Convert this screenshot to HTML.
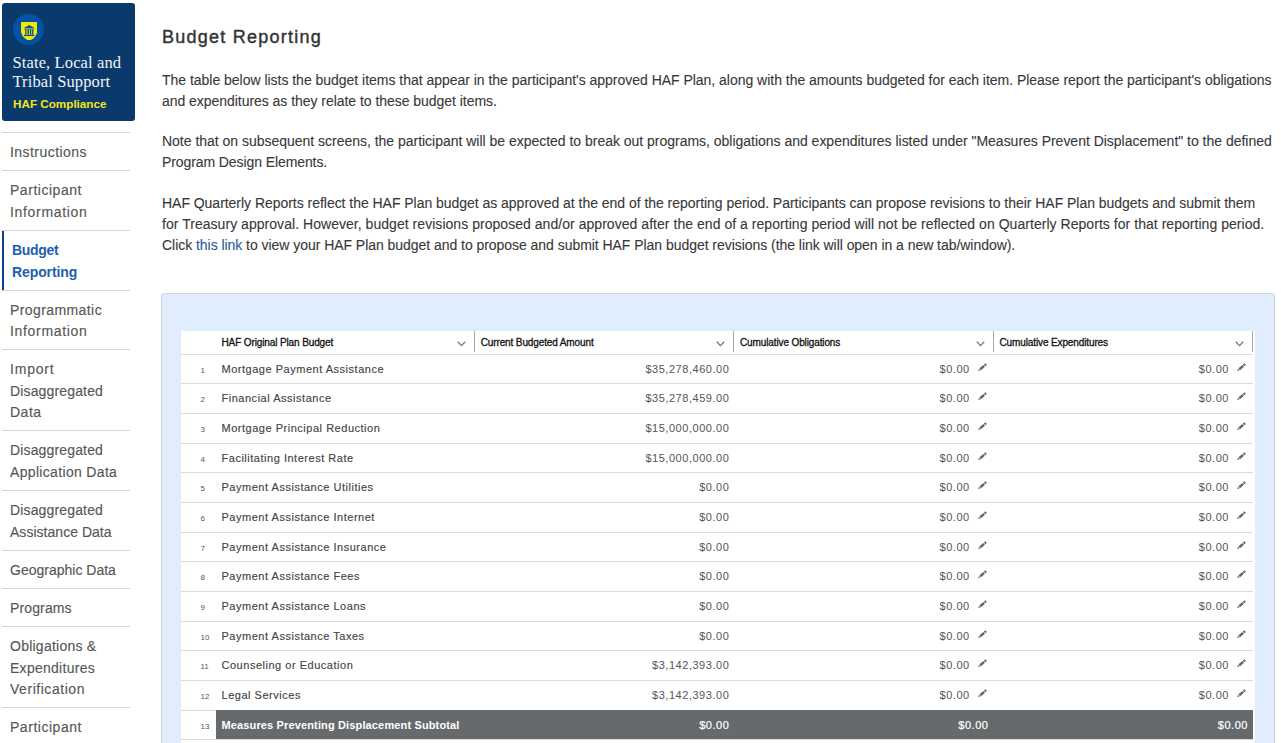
<!DOCTYPE html>
<html><head><meta charset="utf-8">
<style>
*{box-sizing:border-box;margin:0;padding:0}
html,body{width:1281px;height:743px;overflow:hidden;background:#fff;font-family:"Liberation Sans",sans-serif}
.logo{position:absolute;left:2px;top:3px;width:133px;height:118px;background:#0a3a6b;border-radius:3px}
.circ{position:absolute;left:10.9px;top:11px;width:31px;height:31px;border-radius:50%;background:#0352a3}
.logo .t1{position:absolute;left:10.5px;top:50px;font-family:"Liberation Serif",serif;font-size:16.5px;line-height:19px;color:#f2f3f7;letter-spacing:0.12px;white-space:nowrap}
.logo .t2{position:absolute;left:11px;top:94px;font-size:11.7px;font-weight:700;color:#f4e61a;white-space:nowrap;line-height:14px}
.nav{position:absolute;left:2px;top:132.2px;width:128px}
.nav div{border-top:1px solid #d4d4d4;padding:9px 0 6.75px 8px;font-size:14px;line-height:21.45px;color:#575757;position:relative;-webkit-text-stroke:0.15px #575757}
.nav span{display:block;white-space:nowrap}
.nav div.act{color:#1c5fad;font-weight:700;padding-left:10px;-webkit-text-stroke:0}
.nav div.act:before{content:"";position:absolute;left:0;top:0;bottom:0;width:2px;background:#0c3d8e}
.main{position:absolute;left:162px;top:0;width:1115px}
h1{position:absolute;left:0;top:26px;font-size:18px;font-weight:400;letter-spacing:1.25px;-webkit-text-stroke:0.4px #333;color:#333;white-space:nowrap;line-height:22px}
.p{position:absolute;left:0;font-size:14px;line-height:21px;color:#383838;white-space:nowrap;-webkit-text-stroke:0.1px #383838}
.p span{display:block}
.p a{color:#1f5ea8;text-decoration:none}
.box{position:absolute;left:161px;top:293px;width:1114px;height:460px;background:#e0edfd;border:1px solid #cfd6df;border-radius:3px}
.tbl{position:absolute;left:181px;top:331px;width:1074px;background:#fff;padding-right:2px}
.hdr{position:relative;height:23.6px;border-bottom:1.5px solid #dcdcdc}
.hc{position:absolute;top:-0.5px;height:21px;font-size:10px;font-weight:400;-webkit-text-stroke:0.3px #111;letter-spacing:-0.12px;color:#111;line-height:23px;white-space:nowrap}
.sep{position:absolute;top:0;width:1px;height:21px;background:#a8a8a8}
.chev{position:absolute;top:9.5px;width:9px;height:6px}
.row{position:relative;height:29.675px;border-bottom:1px solid #dadada}
.num{position:absolute;left:19.5px;font-size:8px;color:#555;top:1px;line-height:30px}
.nm{position:absolute;left:40.5px;font-size:11px;letter-spacing:0.52px;color:#444;line-height:29px;white-space:nowrap;-webkit-text-stroke:0.15px #444}
.amt{position:absolute;font-size:11px;letter-spacing:0.53px;color:#555;line-height:29px;text-align:right;white-space:nowrap}
.pen{position:absolute;top:8px;width:11px;height:10px}
.sub{position:absolute;left:35px;top:-1px;right:0;bottom:0;background:#676a6d}
.sub .nm{top:1px;left:5.5px;color:#fff;font-weight:700;font-size:11px;letter-spacing:0.14px;-webkit-text-stroke:0}
.sub .amt{color:#fff;-webkit-text-stroke:0.2px #fff;top:1px}
</style></head><body>
<div class="logo">
  <div class="circ"></div>
  <svg style="position:absolute;left:18.6px;top:18.6px" width="16.4" height="18.4" viewBox="0 0 16.5 19" preserveAspectRatio="none">
    <path d="M0 0 H16.5 V8.5 C16.5 14 12.5 18.2 8.25 19 C4 18.2 0 14 0 8.5 Z" fill="#f8e700"/>
    <path d="M8.25 3 L3 6.3 H13.5 Z" fill="#0352a3"/>
    <rect x="3.2" y="6.8" width="10.1" height="1" fill="#0352a3"/>
    <rect x="4.2" y="8" width="1.4" height="5" fill="#0352a3"/>
    <rect x="6.6" y="8" width="1.4" height="5" fill="#0352a3"/>
    <rect x="8.9" y="8" width="1.4" height="5" fill="#0352a3"/>
    <rect x="11" y="8" width="1.4" height="5" fill="#0352a3"/>
    <rect x="3" y="13.2" width="10.5" height="1.3" fill="#0352a3"/>
  </svg>
  <div class="t1">State, Local and<br>Tribal Support</div>
  <div class="t2">HAF Compliance</div>
</div>
<div class="nav">
  <div><span style="letter-spacing:0.45px">Instructions</span></div>
  <div><span style="letter-spacing:0.53px">Participant</span><span style="letter-spacing:0.68px">Information</span></div>
  <div class="act"><span style="letter-spacing:-0.3px">Budget</span><span style="letter-spacing:-0.1px">Reporting</span></div>
  <div><span style="letter-spacing:0.41px">Programmatic</span><span style="letter-spacing:0.68px">Information</span></div>
  <div><span style="letter-spacing:0.8px">Import</span><span style="letter-spacing:0.15px">Disaggregated</span><span style="letter-spacing:0.5px">Data</span></div>
  <div><span style="letter-spacing:0.15px">Disaggregated</span><span style="letter-spacing:0.33px">Application Data</span></div>
  <div><span style="letter-spacing:0.15px">Disaggregated</span><span style="letter-spacing:0.03px">Assistance Data</span></div>
  <div><span style="letter-spacing:0px">Geographic Data</span></div>
  <div><span style="letter-spacing:0.13px">Programs</span></div>
  <div><span style="letter-spacing:0.24px">Obligations &amp;</span><span style="letter-spacing:0.27px">Expenditures</span><span style="letter-spacing:0.54px">Verification</span></div>
  <div><span style="letter-spacing:0.53px">Participant</span><span style="letter-spacing:0.68px">Information</span></div>
</div>
<div class="main">
  <h1>Budget Reporting</h1>
  <div class="p" style="top:70px"><span style="letter-spacing:-0.022px">The table below lists the budget items that appear in the participant's approved HAF Plan, along with the amounts budgeted for each item. Please report the participant's obligations</span><span style="letter-spacing:-0.04px">and expenditures as they relate to these budget items.</span></div>
  <div class="p" style="top:131px"><span style="letter-spacing:-0.017px">Note that on subsequent screens, the participant will be expected to break out programs, obligations and expenditures listed under "Measures Prevent Displacement" to the defined</span><span style="letter-spacing:-0.09px">Program Design Elements.</span></div>
  <div class="p" style="top:193px"><span style="letter-spacing:-0.032px">HAF Quarterly Reports reflect the HAF Plan budget as approved at the end of the reporting period. Participants can propose revisions to their HAF Plan budgets and submit them</span><span style="letter-spacing:0.041px">for Treasury approval. However, budget revisions proposed and/or approved after the end of a reporting period will not be reflected on Quarterly Reports for that reporting period.</span><span style="letter-spacing:-0.043px">Click <a>this link</a> to view your HAF Plan budget and to propose and submit HAF Plan budget revisions (the link will open in a new tab/window).</span></div>
</div>
<div class="box"></div>
<div class="tbl" id="tbl">
<div class="hdr">
<div class="hc" style="left:40.5px">HAF Original Plan Budget</div>
<div class="hc" style="left:299.7px">Current Budgeted Amount</div>
<div class="hc" style="left:559.0px">Cumulative Obligations</div>
<div class="hc" style="left:818.5px">Cumulative Expenditures</div>
<div class="sep" style="left:293.0px"></div>
<svg class="chev" style="left:276.0px" viewBox="0 0 9 6"><path d="M0.8 0.8 L4.5 4.6 L8.2 0.8" fill="none" stroke="#777" stroke-width="1.3"/></svg>
<div class="sep" style="left:552.0px"></div>
<svg class="chev" style="left:535.0px" viewBox="0 0 9 6"><path d="M0.8 0.8 L4.5 4.6 L8.2 0.8" fill="none" stroke="#777" stroke-width="1.3"/></svg>
<div class="sep" style="left:812.0px"></div>
<svg class="chev" style="left:795.0px" viewBox="0 0 9 6"><path d="M0.8 0.8 L4.5 4.6 L8.2 0.8" fill="none" stroke="#777" stroke-width="1.3"/></svg>
<div class="sep" style="left:1071.0px"></div>
<svg class="chev" style="left:1054.0px" viewBox="0 0 9 6"><path d="M0.8 0.8 L4.5 4.6 L8.2 0.8" fill="none" stroke="#777" stroke-width="1.3"/></svg>
</div>
<div class="row">
<div class="num">1</div>
<div class="nm">Mortgage Payment Assistance</div>
<div class="amt" style="right:523.7px">$35,278,460.00</div>
<div class="amt" style="right:283.3px">$0.00</div>
<svg class="pen" style="left:796.0px" viewBox="0 0 11 10"><g transform="translate(1.2 8) rotate(-41)" fill="#666"><path d="M0 0 L2.1 -1.15 L2.1 1.15 Z"/><rect x="2.7" y="-1.2" width="5.2" height="2.4"/><rect x="8.5" y="-1.2" width="2" height="2.4" rx="0.4"/></g></svg>
<div class="amt" style="right:24.0px">$0.00</div>
<svg class="pen" style="left:1055.0px" viewBox="0 0 11 10"><g transform="translate(1.2 8) rotate(-41)" fill="#666"><path d="M0 0 L2.1 -1.15 L2.1 1.15 Z"/><rect x="2.7" y="-1.2" width="5.2" height="2.4"/><rect x="8.5" y="-1.2" width="2" height="2.4" rx="0.4"/></g></svg>
</div>
<div class="row">
<div class="num">2</div>
<div class="nm">Financial Assistance</div>
<div class="amt" style="right:523.7px">$35,278,459.00</div>
<div class="amt" style="right:283.3px">$0.00</div>
<svg class="pen" style="left:796.0px" viewBox="0 0 11 10"><g transform="translate(1.2 8) rotate(-41)" fill="#666"><path d="M0 0 L2.1 -1.15 L2.1 1.15 Z"/><rect x="2.7" y="-1.2" width="5.2" height="2.4"/><rect x="8.5" y="-1.2" width="2" height="2.4" rx="0.4"/></g></svg>
<div class="amt" style="right:24.0px">$0.00</div>
<svg class="pen" style="left:1055.0px" viewBox="0 0 11 10"><g transform="translate(1.2 8) rotate(-41)" fill="#666"><path d="M0 0 L2.1 -1.15 L2.1 1.15 Z"/><rect x="2.7" y="-1.2" width="5.2" height="2.4"/><rect x="8.5" y="-1.2" width="2" height="2.4" rx="0.4"/></g></svg>
</div>
<div class="row">
<div class="num">3</div>
<div class="nm">Mortgage Principal Reduction</div>
<div class="amt" style="right:523.7px">$15,000,000.00</div>
<div class="amt" style="right:283.3px">$0.00</div>
<svg class="pen" style="left:796.0px" viewBox="0 0 11 10"><g transform="translate(1.2 8) rotate(-41)" fill="#666"><path d="M0 0 L2.1 -1.15 L2.1 1.15 Z"/><rect x="2.7" y="-1.2" width="5.2" height="2.4"/><rect x="8.5" y="-1.2" width="2" height="2.4" rx="0.4"/></g></svg>
<div class="amt" style="right:24.0px">$0.00</div>
<svg class="pen" style="left:1055.0px" viewBox="0 0 11 10"><g transform="translate(1.2 8) rotate(-41)" fill="#666"><path d="M0 0 L2.1 -1.15 L2.1 1.15 Z"/><rect x="2.7" y="-1.2" width="5.2" height="2.4"/><rect x="8.5" y="-1.2" width="2" height="2.4" rx="0.4"/></g></svg>
</div>
<div class="row">
<div class="num">4</div>
<div class="nm">Facilitating Interest Rate</div>
<div class="amt" style="right:523.7px">$15,000,000.00</div>
<div class="amt" style="right:283.3px">$0.00</div>
<svg class="pen" style="left:796.0px" viewBox="0 0 11 10"><g transform="translate(1.2 8) rotate(-41)" fill="#666"><path d="M0 0 L2.1 -1.15 L2.1 1.15 Z"/><rect x="2.7" y="-1.2" width="5.2" height="2.4"/><rect x="8.5" y="-1.2" width="2" height="2.4" rx="0.4"/></g></svg>
<div class="amt" style="right:24.0px">$0.00</div>
<svg class="pen" style="left:1055.0px" viewBox="0 0 11 10"><g transform="translate(1.2 8) rotate(-41)" fill="#666"><path d="M0 0 L2.1 -1.15 L2.1 1.15 Z"/><rect x="2.7" y="-1.2" width="5.2" height="2.4"/><rect x="8.5" y="-1.2" width="2" height="2.4" rx="0.4"/></g></svg>
</div>
<div class="row">
<div class="num">5</div>
<div class="nm">Payment Assistance Utilities</div>
<div class="amt" style="right:523.7px">$0.00</div>
<div class="amt" style="right:283.3px">$0.00</div>
<svg class="pen" style="left:796.0px" viewBox="0 0 11 10"><g transform="translate(1.2 8) rotate(-41)" fill="#666"><path d="M0 0 L2.1 -1.15 L2.1 1.15 Z"/><rect x="2.7" y="-1.2" width="5.2" height="2.4"/><rect x="8.5" y="-1.2" width="2" height="2.4" rx="0.4"/></g></svg>
<div class="amt" style="right:24.0px">$0.00</div>
<svg class="pen" style="left:1055.0px" viewBox="0 0 11 10"><g transform="translate(1.2 8) rotate(-41)" fill="#666"><path d="M0 0 L2.1 -1.15 L2.1 1.15 Z"/><rect x="2.7" y="-1.2" width="5.2" height="2.4"/><rect x="8.5" y="-1.2" width="2" height="2.4" rx="0.4"/></g></svg>
</div>
<div class="row">
<div class="num">6</div>
<div class="nm">Payment Assistance Internet</div>
<div class="amt" style="right:523.7px">$0.00</div>
<div class="amt" style="right:283.3px">$0.00</div>
<svg class="pen" style="left:796.0px" viewBox="0 0 11 10"><g transform="translate(1.2 8) rotate(-41)" fill="#666"><path d="M0 0 L2.1 -1.15 L2.1 1.15 Z"/><rect x="2.7" y="-1.2" width="5.2" height="2.4"/><rect x="8.5" y="-1.2" width="2" height="2.4" rx="0.4"/></g></svg>
<div class="amt" style="right:24.0px">$0.00</div>
<svg class="pen" style="left:1055.0px" viewBox="0 0 11 10"><g transform="translate(1.2 8) rotate(-41)" fill="#666"><path d="M0 0 L2.1 -1.15 L2.1 1.15 Z"/><rect x="2.7" y="-1.2" width="5.2" height="2.4"/><rect x="8.5" y="-1.2" width="2" height="2.4" rx="0.4"/></g></svg>
</div>
<div class="row">
<div class="num">7</div>
<div class="nm">Payment Assistance Insurance</div>
<div class="amt" style="right:523.7px">$0.00</div>
<div class="amt" style="right:283.3px">$0.00</div>
<svg class="pen" style="left:796.0px" viewBox="0 0 11 10"><g transform="translate(1.2 8) rotate(-41)" fill="#666"><path d="M0 0 L2.1 -1.15 L2.1 1.15 Z"/><rect x="2.7" y="-1.2" width="5.2" height="2.4"/><rect x="8.5" y="-1.2" width="2" height="2.4" rx="0.4"/></g></svg>
<div class="amt" style="right:24.0px">$0.00</div>
<svg class="pen" style="left:1055.0px" viewBox="0 0 11 10"><g transform="translate(1.2 8) rotate(-41)" fill="#666"><path d="M0 0 L2.1 -1.15 L2.1 1.15 Z"/><rect x="2.7" y="-1.2" width="5.2" height="2.4"/><rect x="8.5" y="-1.2" width="2" height="2.4" rx="0.4"/></g></svg>
</div>
<div class="row">
<div class="num">8</div>
<div class="nm">Payment Assistance Fees</div>
<div class="amt" style="right:523.7px">$0.00</div>
<div class="amt" style="right:283.3px">$0.00</div>
<svg class="pen" style="left:796.0px" viewBox="0 0 11 10"><g transform="translate(1.2 8) rotate(-41)" fill="#666"><path d="M0 0 L2.1 -1.15 L2.1 1.15 Z"/><rect x="2.7" y="-1.2" width="5.2" height="2.4"/><rect x="8.5" y="-1.2" width="2" height="2.4" rx="0.4"/></g></svg>
<div class="amt" style="right:24.0px">$0.00</div>
<svg class="pen" style="left:1055.0px" viewBox="0 0 11 10"><g transform="translate(1.2 8) rotate(-41)" fill="#666"><path d="M0 0 L2.1 -1.15 L2.1 1.15 Z"/><rect x="2.7" y="-1.2" width="5.2" height="2.4"/><rect x="8.5" y="-1.2" width="2" height="2.4" rx="0.4"/></g></svg>
</div>
<div class="row">
<div class="num">9</div>
<div class="nm">Payment Assistance Loans</div>
<div class="amt" style="right:523.7px">$0.00</div>
<div class="amt" style="right:283.3px">$0.00</div>
<svg class="pen" style="left:796.0px" viewBox="0 0 11 10"><g transform="translate(1.2 8) rotate(-41)" fill="#666"><path d="M0 0 L2.1 -1.15 L2.1 1.15 Z"/><rect x="2.7" y="-1.2" width="5.2" height="2.4"/><rect x="8.5" y="-1.2" width="2" height="2.4" rx="0.4"/></g></svg>
<div class="amt" style="right:24.0px">$0.00</div>
<svg class="pen" style="left:1055.0px" viewBox="0 0 11 10"><g transform="translate(1.2 8) rotate(-41)" fill="#666"><path d="M0 0 L2.1 -1.15 L2.1 1.15 Z"/><rect x="2.7" y="-1.2" width="5.2" height="2.4"/><rect x="8.5" y="-1.2" width="2" height="2.4" rx="0.4"/></g></svg>
</div>
<div class="row">
<div class="num">10</div>
<div class="nm">Payment Assistance Taxes</div>
<div class="amt" style="right:523.7px">$0.00</div>
<div class="amt" style="right:283.3px">$0.00</div>
<svg class="pen" style="left:796.0px" viewBox="0 0 11 10"><g transform="translate(1.2 8) rotate(-41)" fill="#666"><path d="M0 0 L2.1 -1.15 L2.1 1.15 Z"/><rect x="2.7" y="-1.2" width="5.2" height="2.4"/><rect x="8.5" y="-1.2" width="2" height="2.4" rx="0.4"/></g></svg>
<div class="amt" style="right:24.0px">$0.00</div>
<svg class="pen" style="left:1055.0px" viewBox="0 0 11 10"><g transform="translate(1.2 8) rotate(-41)" fill="#666"><path d="M0 0 L2.1 -1.15 L2.1 1.15 Z"/><rect x="2.7" y="-1.2" width="5.2" height="2.4"/><rect x="8.5" y="-1.2" width="2" height="2.4" rx="0.4"/></g></svg>
</div>
<div class="row">
<div class="num">11</div>
<div class="nm">Counseling or Education</div>
<div class="amt" style="right:523.7px">$3,142,393.00</div>
<div class="amt" style="right:283.3px">$0.00</div>
<svg class="pen" style="left:796.0px" viewBox="0 0 11 10"><g transform="translate(1.2 8) rotate(-41)" fill="#666"><path d="M0 0 L2.1 -1.15 L2.1 1.15 Z"/><rect x="2.7" y="-1.2" width="5.2" height="2.4"/><rect x="8.5" y="-1.2" width="2" height="2.4" rx="0.4"/></g></svg>
<div class="amt" style="right:24.0px">$0.00</div>
<svg class="pen" style="left:1055.0px" viewBox="0 0 11 10"><g transform="translate(1.2 8) rotate(-41)" fill="#666"><path d="M0 0 L2.1 -1.15 L2.1 1.15 Z"/><rect x="2.7" y="-1.2" width="5.2" height="2.4"/><rect x="8.5" y="-1.2" width="2" height="2.4" rx="0.4"/></g></svg>
</div>
<div class="row">
<div class="num">12</div>
<div class="nm">Legal Services</div>
<div class="amt" style="right:523.7px">$3,142,393.00</div>
<div class="amt" style="right:283.3px">$0.00</div>
<svg class="pen" style="left:796.0px" viewBox="0 0 11 10"><g transform="translate(1.2 8) rotate(-41)" fill="#666"><path d="M0 0 L2.1 -1.15 L2.1 1.15 Z"/><rect x="2.7" y="-1.2" width="5.2" height="2.4"/><rect x="8.5" y="-1.2" width="2" height="2.4" rx="0.4"/></g></svg>
<div class="amt" style="right:24.0px">$0.00</div>
<svg class="pen" style="left:1055.0px" viewBox="0 0 11 10"><g transform="translate(1.2 8) rotate(-41)" fill="#666"><path d="M0 0 L2.1 -1.15 L2.1 1.15 Z"/><rect x="2.7" y="-1.2" width="5.2" height="2.4"/><rect x="8.5" y="-1.2" width="2" height="2.4" rx="0.4"/></g></svg>
</div>
<div class="row"><div class="num">13</div><div class="sub"><div class="nm">Measures Preventing Displacement Subtotal</div>
<div class="amt" style="right:523.7px">$0.00</div>
<div class="amt" style="right:264.5px">$0.00</div>
<div class="amt" style="right:5.0px">$0.00</div>
</div></div>
<div class="row"></div>
</div><!--tblend-->
</body></html>
